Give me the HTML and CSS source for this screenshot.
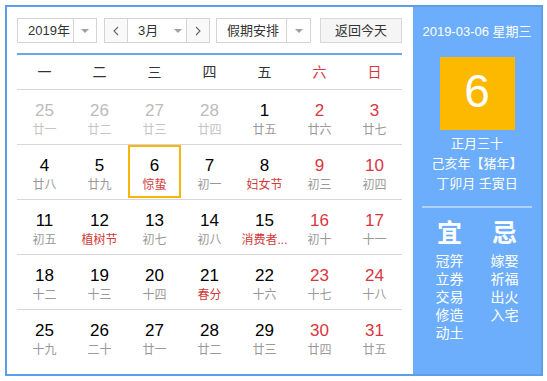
FILE: index.html
```html
<!DOCTYPE html>
<html lang="zh">
<head>
<meta charset="utf-8">
<title>万年历</title>
<link rel="stylesheet" href="styles.css">
</head>
<body>
<div class="cal">
  <div class="main">
    <div class="controls">
      <div class="select year">
        <span class="sel-text">2019年</span>
        <span class="sel-arrow"><i class="tri"></i></span>
      </div>
      <div class="month-group">
        <span class="nav"><svg width="6" height="10" viewBox="0 0 6 10"><path d="M5 1 L1 5 L5 9" fill="none" stroke="#666" stroke-width="1.1"/></svg></span>
        <span class="month-sel"><span class="sel-text">3月</span><i class="tri"></i></span>
        <span class="nav"><svg width="6" height="10" viewBox="0 0 6 10"><path d="M1 1 L5 5 L1 9" fill="none" stroke="#666" stroke-width="1.1"/></svg></span>
      </div>
      <div class="select holiday">
        <span class="sel-text">假期安排</span>
        <span class="sel-arrow"><i class="tri"></i></span>
      </div>
      <div class="btn">返回今天</div>
    </div>
    <div class="blue-line"></div>
    <div class="weekdays">
      <span>一</span><span>二</span><span>三</span><span>四</span><span>五</span><span class="wk">六</span><span class="wk">日</span>
    </div>
    <div class="row">
      <div class="cell other"><b>25</b><em>廿一</em></div>
      <div class="cell other"><b>26</b><em>廿二</em></div>
      <div class="cell other"><b>27</b><em>廿三</em></div>
      <div class="cell other"><b>28</b><em>廿四</em></div>
      <div class="cell"><b>1</b><em>廿五</em></div>
      <div class="cell wknd"><b>2</b><em>廿六</em></div>
      <div class="cell wknd"><b>3</b><em>廿七</em></div>
    </div>
    <div class="row">
      <div class="cell"><b>4</b><em>廿八</em></div>
      <div class="cell"><b>5</b><em>廿九</em></div>
      <div class="cell today"><b>6</b><em class="fest">惊蛰</em></div>
      <div class="cell"><b>7</b><em>初一</em></div>
      <div class="cell"><b>8</b><em class="fest">妇女节</em></div>
      <div class="cell wknd"><b>9</b><em>初三</em></div>
      <div class="cell wknd"><b>10</b><em>初四</em></div>
    </div>
    <div class="row">
      <div class="cell"><b>11</b><em>初五</em></div>
      <div class="cell"><b>12</b><em class="fest">植树节</em></div>
      <div class="cell"><b>13</b><em>初七</em></div>
      <div class="cell"><b>14</b><em>初八</em></div>
      <div class="cell"><b>15</b><em class="fest">消费者...</em></div>
      <div class="cell wknd"><b>16</b><em>初十</em></div>
      <div class="cell wknd"><b>17</b><em>十一</em></div>
    </div>
    <div class="row">
      <div class="cell"><b>18</b><em>十二</em></div>
      <div class="cell"><b>19</b><em>十三</em></div>
      <div class="cell"><b>20</b><em>十四</em></div>
      <div class="cell"><b>21</b><em class="fest">春分</em></div>
      <div class="cell"><b>22</b><em>十六</em></div>
      <div class="cell wknd"><b>23</b><em>十七</em></div>
      <div class="cell wknd"><b>24</b><em>十八</em></div>
    </div>
    <div class="row">
      <div class="cell"><b>25</b><em>十九</em></div>
      <div class="cell"><b>26</b><em>二十</em></div>
      <div class="cell"><b>27</b><em>廿一</em></div>
      <div class="cell"><b>28</b><em>廿二</em></div>
      <div class="cell"><b>29</b><em>廿三</em></div>
      <div class="cell wknd"><b>30</b><em>廿四</em></div>
      <div class="cell wknd"><b>31</b><em>廿五</em></div>
    </div>
  </div>
  <div class="side">
    <div class="side-date">2019-03-06 星期三</div>
    <div class="big-day">6</div>
    <div class="lunar">
      <div>正月三十</div>
      <div>己亥年【猪年】</div>
      <div>丁卯月 壬寅日</div>
    </div>
    <div class="sep"></div>
    <div class="yiji">
      <div class="col">
        <div class="yj-title">宜</div>
        <div>冠笄</div>
        <div>立券</div>
        <div>交易</div>
        <div>修造</div>
        <div>动土</div>
      </div>
      <div class="col">
        <div class="yj-title">忌</div>
        <div>嫁娶</div>
        <div>祈福</div>
        <div>出火</div>
        <div>入宅</div>
      </div>
    </div>
  </div>
</div>
</body>
</html>
```
FILE: styles.css
```css
html, body {
  margin: 0;
  padding: 0;
  background: #fff;
}
body {
  font-family: "Liberation Sans", "Noto Sans CJK SC", sans-serif;
  color: #333;
}
.cal {
  display: flex;
  margin: 5px 0 0 5px;
  width: 538px;
  height: 371px;
  box-sizing: border-box;
  border: 2px solid #5d9ee9;
}
.main {
  width: 406px;
  box-sizing: border-box;
  padding: 11px 0 0 10px;
}
.controls {
  display: flex;
  height: 25px;
  font-size: 13px;
  white-space: nowrap;
}
.select {
  display: flex;
  box-sizing: border-box;
  height: 25px;
  border: 1px solid #d4d4d4;
  background: #fff;
}
.sel-text {
  line-height: 23px;
  color: #333;
  white-space: nowrap;
}
.year { width: 80px; }
.year .sel-text { width: 55px; padding-left: 10px; box-sizing: border-box; }
.holiday { width: 95px; margin-left: 6px; }
.holiday .sel-text { width: 69px; padding-left: 10px; box-sizing: border-box; }
.sel-arrow {
  flex: 1;
  border-left: 1px solid #d4d4d4;
  display: flex;
  align-items: center;
  justify-content: center;
}
.tri {
  display: block;
  width: 0;
  height: 0;
  border-left: 4px solid transparent;
  border-right: 4px solid transparent;
  border-top: 4px solid #a0a0a0;
}
.month-group {
  display: flex;
  width: 106px;
  height: 25px;
  margin-left: 7px;
  box-sizing: border-box;
  border: 1px solid #d4d4d4;
}
.nav {
  width: 22px;
  display: flex;
  align-items: center;
  justify-content: center;
  background: #f9f9f9;
}
.month-sel {
  display: flex;
  align-items: center;
  width: 60px;
  border-left: 1px solid #d4d4d4;
  border-right: 1px solid #d4d4d4;
  box-sizing: border-box;
  padding-left: 10px;
  background: #fff;
}
.month-sel .sel-text { width: 36px; }
.btn {
  width: 82px;
  height: 25px;
  margin-left: 9px;
  box-sizing: border-box;
  border: 1px solid #d8d8d8;
  background: #f5f5f5;
  text-align: center;
  line-height: 23px;
  color: #333;
}
.blue-line {
  width: 385px;
  height: 2px;
  margin-top: 10px;
  background: #6aa8ee;
}
.weekdays {
  display: grid;
  grid-template-columns: repeat(7, 55px);
  height: 34px;
  line-height: 34px;
  font-size: 14px;
  text-align: center;
  color: #333;
}
.weekdays .wk { color: #d9363e; }
.row {
  display: grid;
  grid-template-columns: repeat(7, 55px);
  width: 385px;
  height: 55px;
  box-sizing: border-box;
  border-top: 1px solid #d6d6d6;
}
.cell {
  display: flex;
  flex-direction: column;
  align-items: center;
  padding-top: 12px;
  box-sizing: border-box;
}
.cell b {
  font-weight: normal;
  font-size: 17px;
  line-height: 18px;
  color: #000;
}
.cell em {
  font-style: normal;
  font-size: 12px;
  line-height: 20px;
  color: #999;
  white-space: nowrap;
}
.cell.other b { color: #bbb; }
.cell.other em { color: #c4c4c4; }
.cell.wknd b { color: #d9363e; }
.cell em.fest { color: #d23a3a; }
.cell.today {
  border: 2px solid #f8b60a;
  margin: 0 1px 1px 1px;
  padding-top: 10px;
}
.side {
  width: 128px;
  background: #6caefb;
  color: #fff;
  text-align: center;
  display: flex;
  flex-direction: column;
  align-items: center;
  white-space: nowrap;
}
.side-date {
  margin-top: 15px;
  font-size: 13px;
  line-height: 20px;
}
.big-day {
  width: 75px;
  height: 73px;
  margin-top: 15px;
  background: #fdb800;
  font-family: "Liberation Sans", Arial, sans-serif;
  font-size: 46px;
  line-height: 69px;
  color: #fff;
}
.lunar {
  margin-top: 4px;
  font-size: 13px;
  line-height: 20px;
}
.sep {
  width: 110px;
  height: 2px;
  margin-top: 12px;
  background: rgba(255, 255, 255, 0.45);
}
.yiji {
  display: flex;
  gap: 15px;
  margin-top: 10px;
  font-size: 14px;
  line-height: 18px;
}
.col {
  width: 40px;
  display: flex;
  flex-direction: column;
  align-items: center;
}
.yj-title {
  font-size: 25px;
  line-height: 30px;
  font-weight: bold;
  margin-bottom: 4px;
}
```
